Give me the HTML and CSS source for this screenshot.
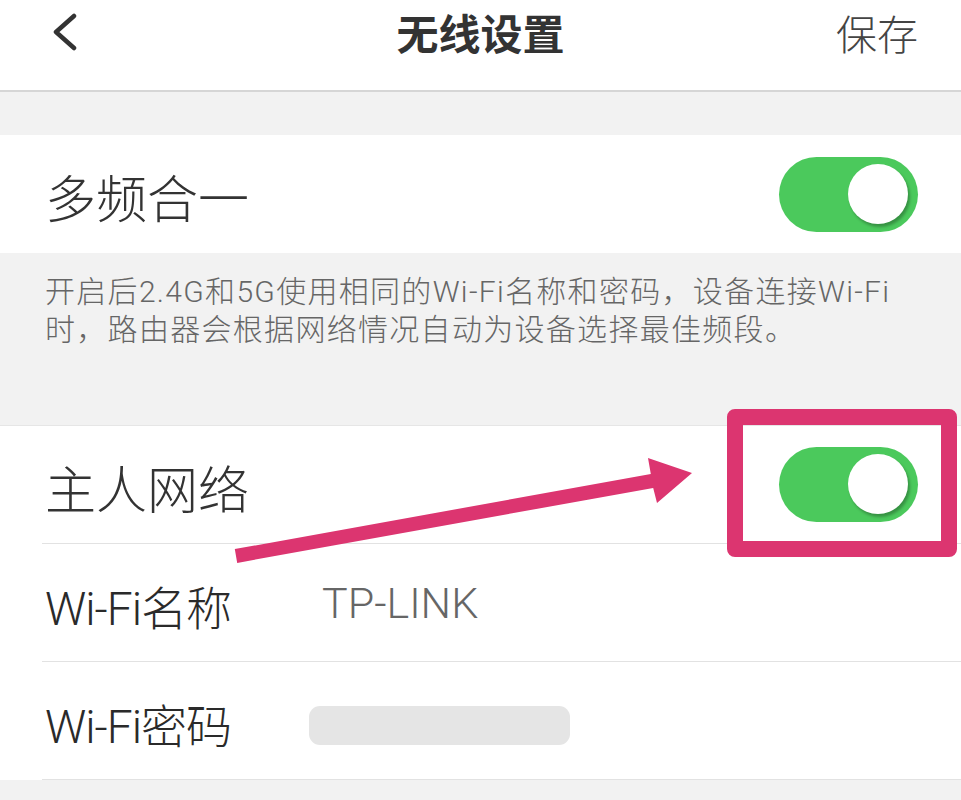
FILE: index.html
```html
<!DOCTYPE html>
<html lang="zh-CN">
<head>
<meta charset="utf-8">
<title>无线设置</title>
<link rel="stylesheet" href="styles.css">
</head>
<body>
<div class="page">
  <header class="topbar">
    <div class="back">
      <svg width="30" height="40" viewBox="0 0 30 40" aria-hidden="true">
        <polyline points="23,3 5,19 23,35" fill="none" stroke="#333" stroke-width="4.5" stroke-linecap="round" stroke-linejoin="round"/>
      </svg>
    </div>
    <h1 class="title">无线设置</h1>
    <div class="save">保存</div>
  </header>

  <div class="spacer"></div>

  <section class="group">
    <div class="row">
      <span class="label">多频合一</span>
      <span class="toggle on"><span class="knob"></span></span>
    </div>
  </section>

  <p class="desc">开启后2.4G和5G使用相同的Wi-Fi名称和密码，设备连接Wi-Fi<br>时，路由器会根据网络情况自动为设备选择最佳频段。</p>

  <section class="group bordered">
    <div class="row line">
      <span class="label">主人网络</span>
      <span class="toggle on"><span class="knob"></span></span>
    </div>
    <div class="row line">
      <span class="label small">Wi-Fi名称</span>
      <span class="value">TP-LINK</span>
    </div>
    <div class="row line">
      <span class="label small">Wi-Fi密码</span>
      <span class="masked"></span>
    </div>
  </section>

  <div class="annot-box"></div>
  <svg class="annot-arrow" width="961" height="800" viewBox="0 0 961 800" aria-hidden="true">
    <polygon fill="#dc3570" points="234.8,549.1 650.8,474.1 648,458 692,473 657,503 653.2,487.9 237.2,562.9"/>
  </svg>
</div>
</body>
</html>
```

FILE: styles.css
```css
html, body {
  margin: 0;
  padding: 0;
}
body {
  background: #f2f2f2;
  font-family: Roboto, "Noto Sans CJK SC", sans-serif;
  color: #333;
}
.page {
  position: relative;
  width: 961px;
  height: 800px;
  overflow: hidden;
}
.topbar {
  height: 90px;
  background: #fff;
  border-bottom: 2px solid #d6d6d6;
  display: grid;
  grid-template-columns: 1fr auto 1fr;
  align-items: start;
}
.back {
  padding-left: 51px;
  padding-top: 13px;
  height: 40px;
}
.back svg {
  display: block;
}
.title {
  margin: 0;
  font-family: "Noto Sans CJK SC", sans-serif;
  font-weight: 700;
  font-size: 42px;
  line-height: 64px;
  color: #333;
}
.save {
  text-align: right;
  padding-right: 43px;
  font-family: "Noto Sans CJK SC", sans-serif;
  font-weight: 300;
  font-size: 41px;
  line-height: 64px;
  color: #444;
}
.spacer {
  height: 43px;
}
.group {
  background: #fff;
}
.group.bordered {
  border-top: 1px solid #e6e6e6;
}
.row {
  height: 118px;
  box-sizing: border-box;
  margin-left: 42px;
  padding-left: 3px;
  padding-right: 43px;
  display: flex;
  align-items: center;
}
.row.line {
  border-bottom: 1px solid #e2e2e2;
}
.label {
  font-size: 51px;
  font-weight: 300;
  color: #333;
  flex: 1;
  padding-top: 4px;
}
.label.small {
  flex: 0 0 264px;
  font-size: 46px;
  color: #2a2a2a;
  letter-spacing: -1px;
}
.value {
  font-size: 43px;
  font-weight: 300;
  color: #666;
  padding-left: 13px;
}
.masked {
  width: 261px;
  height: 39px;
  border-radius: 11px;
  background: #e5e5e5;
  margin-top: 10px;
}
.toggle {
  position: relative;
  width: 139px;
  height: 75px;
  border-radius: 38px;
  background: #4bc95c;
  flex: 0 0 auto;
}
.knob {
  position: absolute;
  right: 10px;
  top: 7px;
  width: 60px;
  height: 60px;
  border-radius: 50%;
  background: #fff;
  box-shadow: 2px 3px 3px rgba(0, 0, 0, 0.28);
}
.desc {
  margin: 0;
  height: 172px;
  box-sizing: border-box;
  padding: 20px 0 0 45px;
  font-size: 30px;
  font-weight: 300;
  line-height: 38px;
  letter-spacing: 1.3px;
  color: #666;
}
.annot-box {
  position: absolute;
  left: 727px;
  top: 409px;
  width: 230px;
  height: 148px;
  box-sizing: border-box;
  border: 16px solid #dc3570;
  border-radius: 8px;
}
.annot-arrow {
  position: absolute;
  left: 0;
  top: 0;
  pointer-events: none;
}
```
